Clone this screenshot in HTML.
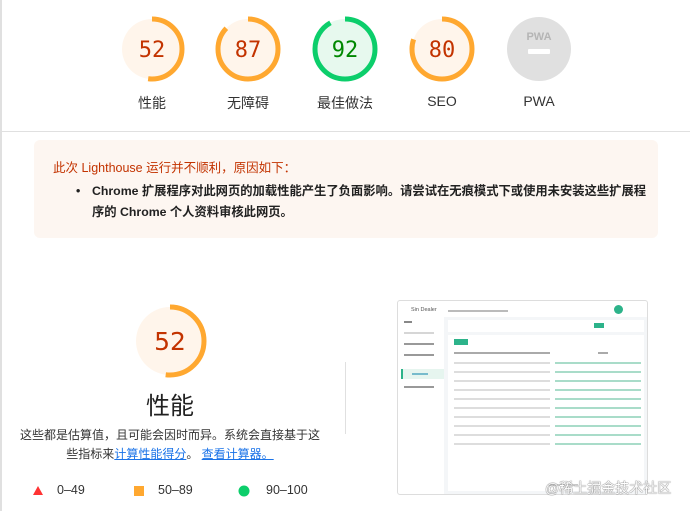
<!DOCTYPE html>
<html><head><meta charset="utf-8"><style>
*{margin:0;padding:0;box-sizing:border-box}
body{width:690px;height:511px;overflow:hidden;background:#fff;font-family:"Liberation Sans","Noto Sans CJK SC",sans-serif;position:relative;color:#212121}
.abs{position:absolute}
.lab{position:absolute;width:100px;text-align:center;font-size:14px;color:#333;top:93px}
.bar{position:absolute;height:2px;background:#d6d6d6}
</style></head><body>
<div class="abs" style="left:0;top:0;width:2px;height:511px;background:#e0e0e0"></div>
<div class="abs" style="left:0;top:131px;width:690px;height:1px;background:#e0e0e0"></div>

<svg class="abs" style="left:0;top:0" width="690" height="130">
<g fill="none" stroke-width="5">
<circle cx="152" cy="49" r="30" fill="#fff5eb" stroke="none"/>
<circle cx="152" cy="49" r="30" stroke="#ffa830" stroke-dasharray="98 200" transform="rotate(-90 152 49)"/>
<circle cx="248" cy="49" r="30" fill="#fff5eb" stroke="none"/>
<circle cx="248" cy="49" r="30" stroke="#ffa830" stroke-dasharray="164 200" transform="rotate(-90 248 49)"/>
<circle cx="345" cy="49" r="30" fill="#e7f9ee" stroke="none"/>
<circle cx="345" cy="49" r="30" stroke="#0cce6b" stroke-dasharray="173 200" transform="rotate(-90 345 49)"/>
<circle cx="442" cy="49" r="30" fill="#fff5eb" stroke="none"/>
<circle cx="442" cy="49" r="30" stroke="#ffa830" stroke-dasharray="151 200" transform="rotate(-90 442 49)"/>
<circle cx="539" cy="49" r="32" fill="#e0e0e0" stroke="none"/>
</g>
<text x="539" y="40" text-anchor="middle" font-size="11" font-weight="bold" fill="#b5b5b5" font-family="Liberation Sans">PWA</text>
<rect x="528" y="49" width="22" height="5" rx="1" fill="#fff"/>
<g font-family="DejaVu Sans Mono,monospace" font-size="22" text-anchor="middle">
<text x="152" y="57" fill="#c33300">52</text>
<text x="248" y="57" fill="#c33300">87</text>
<text x="345" y="57" fill="#008800">92</text>
<text x="442" y="57" fill="#c33300">80</text>
</g>
</svg>
<div class="lab" style="left:102px">性能</div>
<div class="lab" style="left:198px">无障碍</div>
<div class="lab" style="left:295px">最佳做法</div>
<div class="lab" style="left:392px">SEO</div>
<div class="lab" style="left:489px">PWA</div>

<div class="abs" style="left:34px;top:140px;width:624px;height:98px;background:#fdf6f1;border-radius:6px"></div>
<div class="abs" style="left:53px;top:157px;font-size:12.5px;color:#c33300">此次 Lighthouse 运行并不顺利，原因如下：</div>
<div class="abs" style="left:76px;top:181px;width:575px;font-size:12.3px;font-weight:bold;line-height:21px;color:#212121">
<span style="position:absolute;left:0">•</span><div style="padding-left:16px">Chrome 扩展程序对此网页的加载性能产生了负面影响。请尝试在无痕模式下或使用未安装这些扩展程序的 Chrome 个人资料审核此网页。</div></div>

<svg class="abs" style="left:120px;top:291px" width="100" height="100">
<circle cx="50" cy="50" r="34" fill="#fff5eb"/>
<circle cx="50" cy="50" r="34" fill="none" stroke="#ffa830" stroke-width="5" stroke-dasharray="111 300" transform="rotate(-90 50 50)"/>
<text x="50" y="59" text-anchor="middle" font-size="25" fill="#c33300" font-family="DejaVu Sans,sans-serif">52</text>
</svg>
<div class="abs" style="left:120px;top:386px;width:100px;text-align:center;font-size:24px;color:#212121">性能</div>
<div class="abs" style="left:15px;top:426px;width:310px;text-align:center;font-size:12px;line-height:19px;color:#333">这些都是估算值，且可能会因时而异。系统会直接基于这些指标来<span style="color:#1a73e8;text-decoration:underline">计算性能得分</span>。 <span style="color:#1a73e8;text-decoration:underline">查看计算器。</span></div>
<div class="abs" style="left:345px;top:362px;width:1px;height:72px;background:#e0e0e0"></div>
<svg class="abs" style="left:30px;top:484px" width="230" height="14">
<polygon points="8,2 13,11 3,11" fill="#f33"/>
<rect x="104" y="2" width="10" height="10" fill="#ffa830"/>
<circle cx="214" cy="7" r="5.5" fill="#0cce6b"/>
</svg>
<div class="abs" style="left:57px;top:483px;font-size:12.5px;color:#333">0–49</div>
<div class="abs" style="left:158px;top:483px;font-size:12.5px;color:#333">50–89</div>
<div class="abs" style="left:266px;top:483px;font-size:12.5px;color:#333">90–100</div>

<div class="abs" style="left:397px;top:300px;width:251px;height:195px;border:1px solid #ddd;border-radius:3px;background:#fff;overflow:hidden">
<div class="abs" style="left:13px;top:6px;font-size:5.5px;color:#555">Sin Dealer</div>
<div class="bar" style="left:50px;top:9px;width:60px;background:#bbb"></div>
<div class="abs" style="left:216px;top:4px;width:9px;height:9px;border-radius:50%;background:#2db38a"></div>
<div class="abs" style="left:46px;top:16px;width:204px;height:178px;background:#f4f6f8"></div>
<div class="abs" style="left:50px;top:19px;width:196px;height:12px;background:#fff"></div>
<div class="abs" style="left:196px;top:22px;width:10px;height:5px;background:#2db38a"></div>
<div class="abs" style="left:50px;top:34px;width:196px;height:156px;background:#fff"></div>
<div class="abs" style="left:56px;top:38px;width:14px;height:6px;background:#2db38a"></div>
<div class="abs" style="left:3px;top:68px;width:43px;height:10px;background:#e6f5ef;border-left:2px solid #2db38a"></div>
<div class="bar" style="left:6px;top:20px;width:8px;background:#888"></div>
<div class="bar" style="left:6px;top:31px;width:30px"></div>
<div class="bar" style="left:6px;top:42px;width:30px;background:#999"></div>
<div class="bar" style="left:6px;top:53px;width:30px;background:#999"></div>
<div class="bar" style="left:14px;top:72px;width:16px;background:#7bc"></div>
<div class="bar" style="left:6px;top:85px;width:30px;background:#999"></div>
<div class="bar" style="left:56px;top:51px;width:96px;background:#aaa"></div>
<div class="bar" style="left:200px;top:51px;width:10px;background:#aaa"></div>
<div class="abs" style="left:56px;top:58px;width:96px;height:90px;background:repeating-linear-gradient(#fff 0 3px,#ddd 3px 5px,#fff 5px 9px)"></div>
<div class="abs" style="left:157px;top:58px;width:86px;height:90px;background:repeating-linear-gradient(#fff 0 3px,#a9dcc9 3px 5px,#fff 5px 9px)"></div>
<div class="abs" style="left:150px;top:183px;width:30px;height:2px;background:#ccc"></div>
</div>
<div class="abs" style="left:545px;top:478px;font-size:14px;color:#fff;text-shadow:0 0 1px #666,0 0 1px #666">@稀土掘金技术社区</div>
</body></html>
